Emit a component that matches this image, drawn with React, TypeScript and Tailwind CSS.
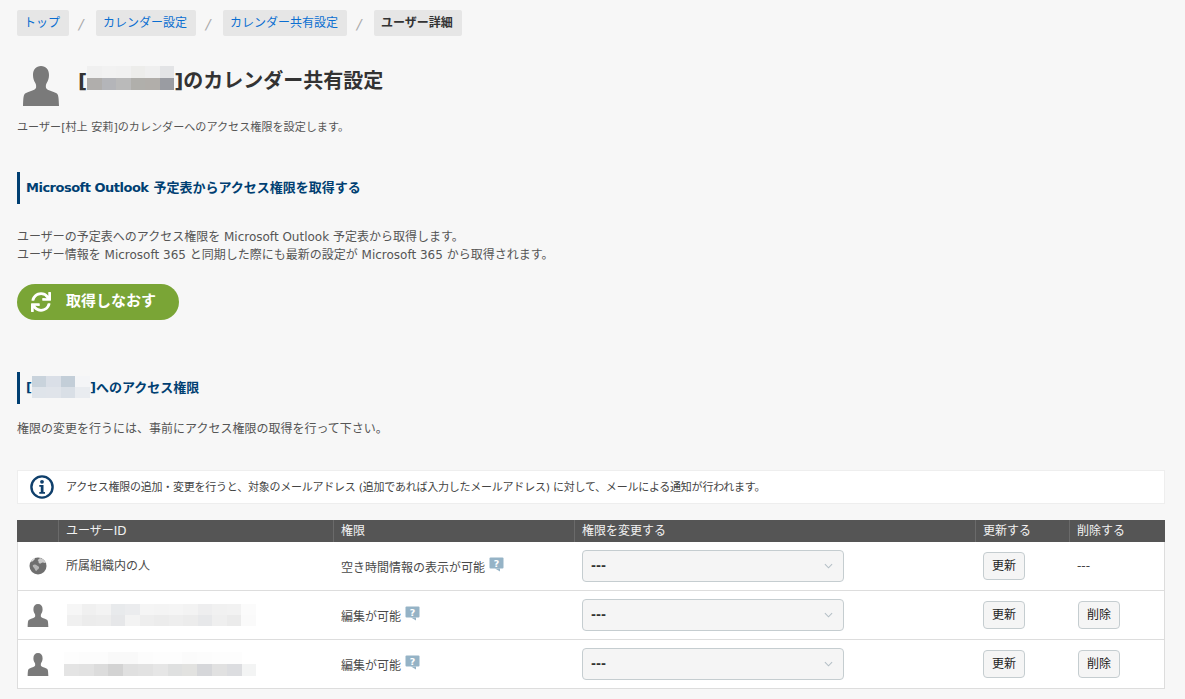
import React from "react";
import { FaSync } from "react-icons/fa";

const FONT = "font-['DejaVu_Sans','Noto_Sans_CJK_JP',sans-serif]";

function Mosaic({ rows, cell = 14, h = 14, className = "" }: { rows: string[][]; cell?: number; h?: number; className?: string }) {
  return (
    <span className={`inline-flex flex-col align-top ${className}`}>
      {rows.map((r, i) => (
        <span key={i} className="flex">
          {r.map((c, j) => (
            <span key={j} style={{ width: cell, height: h, background: c }} />
          ))}
        </span>
      ))}
    </span>
  );
}

function Person({ className }: { className: string }) {
  return (
    <svg viewBox="0 0 36 40" className={className}>
      <path
        fill="#7a7a7a"
        d="M18 0c-5 0-8 3.600-8 9 0 3 .8 5.800 2.300 8 .7 1.100 1 2.600.8 4.200-.2 1.300-1.300 2.200-3.100 3-2.600 1-5.500 1.800-7.500 3C.6 28.400.3 31 0 40h36c-.3-9-.6-11.600-2.500-12.800-2-1.200-4.900-2-7.500-3-1.800-.8-2.900-1.700-3.100-3-.2-1.600.1-3.100.8-4.200C25.200 14.800 26 12 26 9c0-5.400-3-9-8-9z"
      />
    </svg>
  );
}

function Globe() {
  return (
    <svg viewBox="0 0 18 18" className="w-[18px] h-[18px]">
      <circle cx="9" cy="9" r="8.500" fill="#6f6f6f" />
      <path fill="#c9c9c9" d="M11 1c3 .6 5 2.500 6 5-1.500.3-2.500-.5-3.500-.5S12 7 10.500 6.500 10 4 9 3.500 10.500 2 11 1z" />
      <path fill="#b5b5b5" d="M4 8c1.500-1 3-.5 4 .5s2.500 1 2 2.500-2 1.500-2.500 3c-1 0-1.500-1.500-2-2.500S3 9.500 4 8z" />
      <path fill="#dddddd" d="M2 4c1-1.500 2.500-2.500 4-3 .5 1-1 2-2 3S2.500 5 2 4z" />
    </svg>
  );
}

function Help() {
  return (
    <svg viewBox="0 0 15 15" className="inline-block w-[15px] h-[15px] ml-1 align-[0px]">
      <rect x="0.500" y="0.500" width="14" height="11" rx="1" fill="#95b3c6" />
      <path d="M6 11.500h5v3z" fill="#95b3c6" />
      <text x="7.500" y="9.500" textAnchor="middle" fontSize="9.500" fontWeight="700" fill="#ffffff" fontFamily="DejaVu Sans">?</text>
    </svg>
  );
}

function Info() {
  return (
    <svg viewBox="0 0 24 24" className="w-6 h-6 shrink-0">
      <circle cx="12" cy="12" r="10.600" fill="#ffffff" stroke="#0f3f6b" strokeWidth="2.400" />
      <circle cx="12" cy="6.800" r="1.900" fill="#0f3f6b" />
      <path d="M9.300 10h4.200v7h1.500v1.800H9.300V17h1.500v-5.200H9.300z" fill="#0f3f6b" />
    </svg>
  );
}

function Crumb({ label, active }: { label: string; active?: boolean }) {
  return (
    <span
      className={`h-[26px] pl-[7px] pr-[9px] flex items-center bg-[#e6e6e6] rounded-[2px] text-xs ${
        active ? "text-[#333333] font-bold" : "text-[#0a6ed1]"
      }`}
    >
      {label}
    </span>
  );
}

function Sep() {
  return <span className="w-[27px] pr-[3px] text-center text-[#aaaaaa] text-sm italic pt-1">/</span>;
}

function SectionTitle({ children }: { children: React.ReactNode }) {
  return (
    <h2 className="h-8 border-l-[3px] border-[#003f72] pl-[6px] flex items-center text-[13px] font-bold text-[#003f72]">
      {children}
    </h2>
  );
}

function PermSelect() {
  return (
    <div className="w-[262px] h-8 rounded border border-[#c5cdd0] bg-[#f5f5f5] flex items-center justify-between pl-2 pr-2 text-xs font-bold text-[#333333]">
      <span>---</span>
      <svg viewBox="0 0 10 6" className="w-[9px] h-[6px] mr-0.5">
        <path d="M1 1l4 4 4-4" fill="none" stroke="#b4bfc6" strokeWidth="1.200" />
      </svg>
    </div>
  );
}

function SmallBtn({ label }: { label: string }) {
  return (
    <button className="w-[42px] h-7 rounded border border-[#c5cdd0] bg-[#f5f5f5] text-xs text-[#222222]">
      {label}
    </button>
  );
}

const ROW_GRID = "grid grid-cols-[40px_275px_241px_401px_94px_95px]";
const HEAD_GRID = "grid grid-cols-[41px_275px_241px_401px_94px_96px]";

function Row({
  icon,
  id,
  perm,
  del,
}: {
  icon: React.ReactNode;
  id: React.ReactNode;
  perm: string;
  del: React.ReactNode;
}) {
  return (
    <div className={`${ROW_GRID} h-[49px] items-center bg-white border-b border-[#dddddd] text-xs text-[#4a4a4a]`}>
      <div className="flex justify-center">{icon}</div>
      <div className="pl-2">{id}</div>
      <div className="pl-2">
        {perm}
        <Help />
      </div>
      <div className="pl-2">
        <PermSelect />
      </div>
      <div className="pl-2">
        <SmallBtn label="更新" />
      </div>
      <div className="pl-[9px]">{del}</div>
    </div>
  );
}

const ID_ONE = [
  ["#f6f6f6", "#f0f0f0", "#f3f3f3", "#e8eaec", "#ebecee", "#f5f5f5", "#f4f4f4", "#f5f5f5", "#f3f3f3", "#eeeeef", "#f1f1f1", "#f2f2f2", "#fbfbfb"],
  ["#f0f0f0", "#ececec", "#ededed", "#e6e7e9", "#f3f3f3", "#eeeeee", "#ececec", "#eeeeee", "#ececec", "#e7e8ea", "#efefef", "#ebebeb", "#fafafa"],
];
const ID_TWO = [
  ["#fdfdfd", "#fcfcfc", "#fcfcfc", "#f9f9f9", "#f9f9f9", "#fcfcfc", "#fdfdfd", "#fdfdfd", "#fbfbfb", "#fcfcfc", "#fdfdfd", "#fdfdfd", "#ffffff"],
  ["#e4e4e4", "#e2e2e2", "#dcdcdc", "#d3d3d3", "#e0e0e0", "#e2e2e2", "#e6e6e6", "#dfe0e0", "#e2e2e0", "#d6d7da", "#e1e1e1", "#dcdde0", "#f3f4f4"],
];

export default function App() {
  return (
    <div className={`${FONT} w-[1185px] h-[699px] overflow-hidden bg-[#f7f7f7] text-[#555555] pt-[10px] pl-[17px] pr-5`}>
      <nav className="flex">
        <Crumb label="トップ" />
        <Sep />
        <Crumb label="カレンダー設定" />
        <Sep />
        <Crumb label="カレンダー共有設定" />
        <Sep />
        <Crumb label="ユーザー詳細" active />
      </nav>

      <div className="flex items-start mt-[30px] pl-1.5">
        <Person className="w-9 h-10 shrink-0" />
        <h1 className="ml-[19px] text-xl font-bold leading-[30px] text-[#333333] flex items-center">
          [
          <Mosaic
            className="mb-[6px]"
            cell={14.500}
            h={12}
            rows={[
              ["#f0f0f0", "#f2f2f2", "#f1f1f1", "#ededeb", "#efefef", "#e3e4e6"],
              ["#b0aeac", "#b4b5b9", "#bababa", "#b0afab", "#b1aeaa", "#9a9ca2"],
            ]}
          />
          ]のカレンダー共有設定
        </h1>
      </div>

      <p className="mt-[13px] text-[11.100px] leading-[18px]">ユーザー[村上 安莉]のカレンダーへのアクセス権限を設定します。</p>

      <div className="mt-[35px]">
        <SectionTitle>
          <span className="tracking-[-0.500px]">Microsoft Outlook</span>
          <span className="ml-[5px]">予定表からアクセス権限を取得する</span>
        </SectionTitle>
      </div>

      <p className="mt-6 text-xs leading-[18px]">
        ユーザーの予定表へのアクセス権限を Microsoft Outlook 予定表から取得します。
        <br />
        ユーザー情報を Microsoft 365 と同期した際にも最新の設定が Microsoft 365 から取得されます。
      </p>

      <button className="mt-5 w-[162px] h-9 rounded-full bg-[#7aa536] flex items-center pl-[14px] text-white text-[15px] font-bold">
        <FaSync className="w-5 h-5" />
        <span className="ml-[15px] pb-0.5">取得しなおす</span>
      </button>

      <div className="mt-[52px]">
        <SectionTitle>
          [
          <Mosaic
            className="mb-[2px]"
            cell={14.500}
            h={11}
            rows={[
              ["#c9d3dc", "#dadfe7", "#c3ced8", "#f4f5f7"],
              ["#dfe4ea", "#e0e4ea", "#d9dfe6", "#e9ecf0"],
            ]}
          />
          ]へのアクセス権限
        </SectionTitle>
      </div>

      <p className="mt-4 text-xs leading-[18px]">権限の変更を行うには、事前にアクセス権限の取得を行って下さい。</p>

      <div className="mt-8 h-[34px] bg-white border border-[#eeeeee] flex items-center pl-3 text-[11px] text-[#444444]">
        <Info />
        <span className="ml-3 pt-0.5 tracking-[-0.240px]">アクセス権限の追加・変更を行うと、対象のメールアドレス (追加であれば入力したメールアドレス) に対して、メールによる通知が行われます。</span>
      </div>

      <div className="mt-4 border-x border-[#dddddd] w-[1148px]">
        <div className={`${HEAD_GRID} h-[22px] bg-[#555555] text-xs text-[#f2f2f2] items-stretch -mx-px`}>
          <div />
          {["ユーザーID", "権限", "権限を変更する", "更新する", "削除する"].map((h) => (
            <div key={h} className="pl-[7px] flex items-center border-l border-[#6a6a6a]">
              {h}
            </div>
          ))}
        </div>
        <Row
          icon={<Globe />}
          id="所属組織内の人"
          perm="空き時間情報の表示が可能"
          del={<span className="text-[#444444] -ml-px">---</span>}
        />
        <Row
          icon={<Person className="w-[22px] h-[23px]" />}
          id={<Mosaic className="ml-px" cell={14.500} h={11} rows={ID_ONE} />}
          perm="編集が可能"
          del={<SmallBtn label="削除" />}
        />
        <Row
          icon={<Person className="w-[22px] h-[23px]" />}
          id={<Mosaic className="-ml-0.5" cell={14.800} h={12} rows={ID_TWO} />}
          perm="編集が可能"
          del={<SmallBtn label="削除" />}
        />
      </div>
    </div>
  );
}
